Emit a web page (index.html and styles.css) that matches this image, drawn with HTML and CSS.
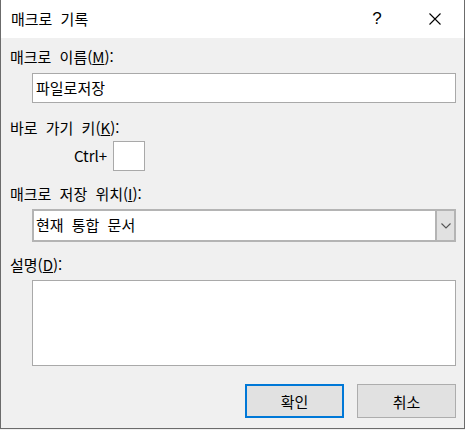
FILE: index.html
```html
<!DOCTYPE html>
<html lang="ko">
<head>
<meta charset="utf-8">
<title>매크로 기록</title>
<link rel="stylesheet" href="styles.css">
</head>
<body>
<div class="window">
  <div class="titlebar">
    <div class="title">매크로 기록</div>
    <div class="capbtn help">?</div>
    <div class="capbtn close">
      <svg width="12" height="12" viewBox="0 0 12 12"><path d="M0.5 0.5 L11.5 11.5 M11.5 0.5 L0.5 11.5" stroke="#000" stroke-width="1.1" fill="none"/></svg>
    </div>
  </div>
  <div class="content">
    <div class="label l1">매크로 이름(<u>M</u>):</div>
    <div class="field f1">파일로저장</div>
    <div class="label l2">바로 가기 키(<u>K</u>):</div>
    <div class="ctrlrow">
      <span class="ctrl">Ctrl+</span>
      <div class="keybox"></div>
    </div>
    <div class="label l3">매크로 저장 위치(<u>I</u>):</div>
    <div class="combo">
      <div class="combotext">현재 통합 문서</div>
      <div class="combobtn">
        <svg width="10" height="6" viewBox="0 0 10 6"><path d="M0.5 0.5 L5 5 L9.5 0.5" stroke="#555" stroke-width="1.1" fill="none"/></svg>
      </div>
    </div>
    <div class="label l4">설명(<u>D</u>):</div>
    <div class="memo"></div>
    <div class="buttons">
      <div class="btn ok">확인</div>
      <div class="btn cancel">취소</div>
    </div>
  </div>
</div>
</body>
</html>
```

FILE: styles.css
```css
html, body {
  margin: 0;
  padding: 0;
  background: #f0f0f0;
}
body {
  font-family: "Noto Sans CJK KR", "Noto Sans", sans-serif;
  font-size: 15px;
  word-spacing: 4px;
  color: #000;
}
.window {
  width: 465px;
  height: 429px;
  box-sizing: border-box;
  border: 1px solid #6b6b6b;
  border-top: none;
  background: #f0f0f0;
  display: flex;
  flex-direction: column;
}
.titlebar {
  height: 38px;
  background: #fff;
  display: flex;
  align-items: center;
}
.title {
  flex: 1;
  padding-left: 10px;
  line-height: 20px;
  margin-top: -1px;
}
.capbtn {
  width: 58px;
  height: 38px;
  display: flex;
  align-items: center;
  justify-content: center;
}
.help {
  font-family: "Liberation Sans", sans-serif;
  font-size: 17px;
  margin-top: -1px;
}
.content {
  padding: 0 8px 0 9px;
  display: flex;
  flex-direction: column;
}
.label {
  height: 20px;
  line-height: 20px;
}
.l1 { margin-top: 9px; }
.l2 { margin-top: 15px; }
.l3 { margin-top: 13px; }
.l4 { margin-top: 13px; }
.field {
  margin: 6px 0 0 22px;
  height: 30px;
  box-sizing: border-box;
  border: 1px solid #a9a9a9;
  background: #fff;
  padding-left: 3px;
  line-height: 27px;
}
.ctrlrow {
  margin-top: 3px;
  display: flex;
  align-items: center;
  padding-left: 64px;
}
.ctrl {
  width: 39px;
  line-height: 20px;
}
.keybox {
  width: 32px;
  height: 30px;
  box-sizing: border-box;
  border: 1px solid #a9a9a9;
  background: #fff;
}
.combo {
  margin: 5px 0 0 22px;
  height: 33px;
  box-sizing: border-box;
  border: 2px solid #b4b4b4;
  background: #fff;
  display: flex;
}
.combotext {
  flex: 1;
  padding-left: 2px;
  line-height: 28px;
}
.combobtn {
  width: 17px;
  border-left: 2px solid #b4b4b4;
  background: #e1e1e1;
  display: flex;
  align-items: center;
  justify-content: center;
}
.memo {
  margin: 5px 0 0 22px;
  height: 86px;
  box-sizing: border-box;
  border: 1px solid #a9a9a9;
  background: #fff;
}
.buttons {
  margin-top: 18px;
  display: flex;
  justify-content: flex-end;
  gap: 13px;
}
.btn {
  width: 99px;
  height: 34px;
  box-sizing: border-box;
  background: #e1e1e1;
  border: 1px solid #adadad;
  display: flex;
  align-items: center;
  justify-content: center;
}
.ok {
  border: 2px solid #0078d7;
}
```
